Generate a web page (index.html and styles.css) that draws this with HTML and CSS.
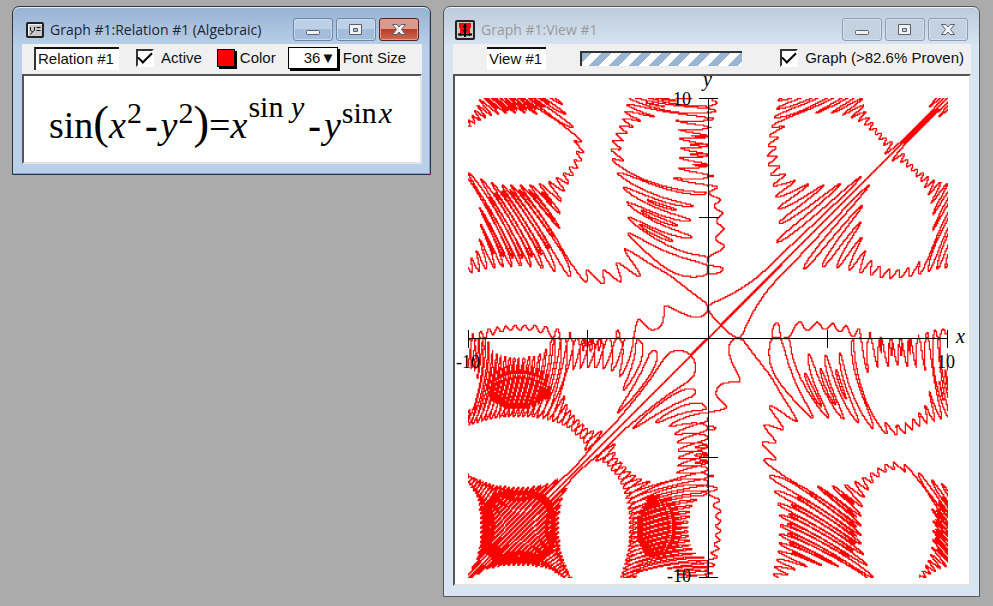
FILE: index.html
```html
<!DOCTYPE html>
<html lang="en">
<head>
<meta charset="utf-8">
<title>Graph #1</title>
<link rel="stylesheet" href="styles.css">
</head>
<body>
<main class="desktop">
  <section class="window window-active">
    <header class="titlebar">
      <svg class="app-icon" width="18" height="18" viewBox="0 0 18 18" aria-hidden="true">
        <rect x="1" y="2" width="16" height="14" rx="1" fill="#c8c8c8" stroke="#222" stroke-width="2"/>
        <path d="M2.500 14V3.500H16" fill="none" stroke="#f4f4f4"/>
        <path d="M4.500 6v3l2 2 2-2V6M6.500 11l-2 2.500M10.500 6.500h4M10.500 9.500h4" fill="none" stroke="#111"/>
      </svg>
      <h1 class="title">Graph #1:Relation #1 (Algebraic)</h1>
      <div class="controls">
        <button class="control" type="button" aria-label="Minimize"><svg width="16" height="14" viewBox="0 0 16 14"><rect x="1.500" y="7.500" width="13" height="4" rx="1"/></svg></button>
        <button class="control" type="button" aria-label="Maximize"><svg width="16" height="14" viewBox="0 0 16 14"><path fill-rule="evenodd" d="M1.500 1.500h12v10h-12zM5.500 5.500v3h4v-3z"/></svg></button>
        <button class="control control-close" type="button" aria-label="Close"><svg width="16" height="14" viewBox="0 0 16 14"><path d="M1.500 1.500h4.500l2 2.500 2-2.500h4.500l-4 5 4 5H10L8 9l-2 2.500H1.500l4-5z"/></svg></button>
      </div>
    </header>
    <div class="client">
      <div class="toolbar">
        <input class="name name-relation" type="text" value="Relation #1" aria-label="Relation name">
        <label class="field"><input class="check" type="checkbox" checked>Active</label>
        <div class="field field-color"><button class="swatch" type="button" id="color"></button><label for="color">Color</label></div>
        <div class="field field-size"><select class="size" id="size"><option>36▼</option></select><label for="size">Font Size</label></div>
      </div>
      <div class="pane equation">
        <span>sin</span><span class="paren">(</span><i>x</i><sup>2</sup><span class="minus">-</span><i>y</i><sup>2</sup><span class="paren">)</span><span>=</span><i>x</i><sup class="high">sin <i>y</i></sup><span class="minus">-</span><i>y</i><sup>sin<i class="thin">x</i></sup>
      </div>
    </div>
  </section>

  <section class="window">
    <header class="titlebar">
      <svg class="app-icon app-icon-view" width="20" height="20" viewBox="0 0 20 20" aria-hidden="true">
        <rect x="1" y="1" width="18" height="18" rx="1" fill="#c8c8c8" stroke="#222" stroke-width="2"/>
        <path d="M4 3h12v4l-1 2v4H5V9L4 7z" fill="#f00"/>
        <path d="M10 4v13M3 14.500h14" fill="none" stroke="#000" stroke-width="2"/>
        <path d="M8 6.500h4M8 10.500h4M5.500 13v3M14.500 13v3" fill="none" stroke="#000"/>
      </svg>
      <h1 class="title">Graph #1:View #1</h1>
      <div class="controls">
        <button class="control" type="button" aria-label="Minimize"><svg width="16" height="14" viewBox="0 0 16 14"><rect x="1.500" y="7.500" width="13" height="4" rx="1"/></svg></button>
        <button class="control" type="button" aria-label="Maximize"><svg width="16" height="14" viewBox="0 0 16 14"><path fill-rule="evenodd" d="M1.500 1.500h12v10h-12zM5.500 5.500v3h4v-3z"/></svg></button>
        <button class="control" type="button" aria-label="Close"><svg width="16" height="14" viewBox="0 0 16 14"><path d="M1.500 1.500h4.500l2 2.500 2-2.500h4.500l-4 5 4 5H10L8 9l-2 2.500H1.500l4-5z"/></svg></button>
      </div>
    </header>
    <div class="client">
      <div class="toolbar toolbar-view">
        <input class="name name-view" type="text" value="View #1" aria-label="View name">
        <div class="progress" role="progressbar" aria-label="Proof progress"></div>
        <label class="field field-graph"><input class="check" type="checkbox" checked>Graph (&gt;82.6% Proven)</label>
      </div>
      <div class="pane">
        <svg class="plot" viewBox="0 0 514 508" role="img" aria-label="Plot of the relation">
          <path id="curve" class="curve" transform="translate(13 22) scale(1.2)"/>
          <path class="axes" d="M13 262.500H492M253.500 22V502M13.500 254V272M132.500 254V272M372.500 254V272M492.500 254V272M244 22.500H263M244 141.500H263M244 381.500H263M244 501.500H263"/>
          <g class="ticks">
            <text x="218" y="29">10</text>
            <text x="212" y="506">-10</text>
            <text x="1" y="292">-10</text>
            <text x="482" y="292">10</text>
          </g>
          <g class="names">
            <text x="248" y="10">y</text>
            <text x="501" y="267">x</text>
          </g>
        </svg>
      </div>
    </div>
  </section>
</main>
<script src="plot.js"></script>
</body>
</html>
```
FILE: styles.css
```css
* { box-sizing: border-box; }

body {
  margin: 0;
  min-height: 100vh;
  background: #ababab;
  font: 15px/18px "Liberation Sans", Arial, sans-serif;
  color: #111;
}

.desktop {
  display: grid;
  grid-template-columns: 419fr 537fr;
  align-items: start;
  gap: 12px;
  padding: 6px 13px 6px 12px;
}

.window {
  padding: 0 8px 10px 9px;
  border: 1px solid #555;
  border-radius: 7px 7px 0 0;
  background: linear-gradient(#bccada, #d8e5f2 40px);
  box-shadow: inset 0 1px #eef4fa;
  min-width: 0;
}

.window-active {
  border-color: #333;
  background: linear-gradient(#98b2d0, #b9d0ea 40px);
  box-shadow: inset 0 1px #e4f0fa, inset -1px -1px #35c6dc;
}

.titlebar {
  display: flex;
  align-items: center;
  height: 37px;
  padding: 8px 3px 0 4px;
}

.app-icon { flex: none; }
.app-icon-view { margin-left: -2px; }

.title {
  flex: 1;
  margin: 0 0 0 6px;
  font: 14px/20px "Open Sans", "Noto Sans", sans-serif;
  color: #1c2633;
  white-space: nowrap;
}

.window:not(.window-active) .title { color: #999; }

.controls {
  display: flex;
  gap: 3px;
}

.control {
  display: grid;
  place-items: center;
  width: 40px;
  height: 23px;
  padding: 0;
  border: 1px solid #8d9db8;
  border-radius: 3px;
  background: #c3d1e1;
  box-shadow: inset 0 0 0 1px #d5e0ec;
}

.control svg {
  fill: #f2f2f2;
  stroke: #5a6070;
}

.window-active .control {
  border-color: #6f86a6;
  background: linear-gradient(#bdd0e6 50%, #a4bdda 50%);
  box-shadow: inset 0 0 0 1px #c9daec;
}

.window-active .control-close {
  border-color: #5d1e1e;
  background: linear-gradient(#d99a8e 48%, #b93c28 50%, #cd6b50);
  box-shadow: inset 0 0 0 1px #df9d90;
}

.client { background: #f0f0f0; }

.toolbar {
  display: flex;
  align-items: center;
  height: 30px;
  padding: 0 12px 2px;
}

.toolbar-view { padding: 0 7px 2px 34px; }

.name {
  height: 23px;
  padding: 0 2px 2px;
  border: 0;
  border-top: 2px solid #111;
  background: #fff;
  font: inherit;
  color: inherit;
}

.name-relation {
  width: 85px;
  border-left: 2px solid #333;
}

.name-view { width: 59px; }

.field {
  display: flex;
  align-items: center;
  gap: 5px;
  white-space: nowrap;
}

.field:not(.field-color):not(.field-size) {
  gap: 7px;
  margin-left: 17px;
}

.field-color { margin-left: 15px; }
.field-size { margin-left: 12px; }
.toolbar .field-graph:not(.field-color) { margin-left: auto; }

.check {
  appearance: none;
  width: 18px;
  height: 18px;
  margin: 0;
  border: 2px solid;
  border-color: #333 #fff #fff #333;
  background: #fff;
  display: grid;
  place-items: center;
}

.check:checked::before {
  content: "";
  width: 12px;
  height: 6px;
  margin-top: -4px;
  border: solid #000;
  border-width: 0 0 2px 2px;
  transform: rotate(-45deg);
}

.swatch {
  width: 18px;
  height: 18px;
  padding: 0;
  border: 1px solid #000;
  background: #f00;
  box-shadow: 2px 2px #000;
}

.size {
  appearance: none;
  width: 50px;
  height: 22px;
  padding: 0 3px 0 15px;
  border: 1px solid #000;
  border-radius: 0;
  background: #fff;
  box-shadow: 2px 2px #000;
  font: inherit;
  color: inherit;
}

.progress {
  width: 162px;
  height: 15px;
  margin-left: 34px;
  border-top: 2px solid #333;
  border-left: 2px solid #333;
  background: repeating-linear-gradient(135deg, #9ab5d4 0 7px, #fff 7px 14px);
}

.pane {
  border: 2px solid;
  border-color: #555 #e3e3e3 #e3e3e3 #555;
  background: #fff;
}

.equation {
  height: 90px;
  padding: 0 25px;
  font: 38px/98px "Liberation Serif", "Times New Roman", serif;
  color: #000;
  white-space: nowrap;
  overflow: hidden;
}

.equation i { margin-right: 1px; }

.equation sup {
  font-size: 30px;
  line-height: 0;
  vertical-align: 15px;
}

.equation .high { vertical-align: 21px; }

.equation .paren {
  font-size: 47px;
  line-height: 0;
}

.equation .minus {
  margin: 0 3px;
  font-weight: bold;
}

.equation .thin { margin-left: 2px; }

.plot {
  display: block;
  width: 100%;
  height: auto;
  overflow: visible;
}

.curve { fill: #f00; }

.axes {
  fill: none;
  stroke: #000;
  shape-rendering: crispEdges;
}

.ticks { font: 18px "Liberation Serif", serif; }
.names { font: italic 20px "Liberation Serif", serif; }
```
FILE: plot.js
```js
// Plots sin(x^2 - y^2) = x^sin(y) - y^sin(x) over [-10, 10] x [-10, 10].
// A negative base raised to a rational power may be of either sign,
// so both signs are tried for each negative coordinate.
const SIZE = 400;
const SUB = 2;
const N = SIZE * SUB;
const half = N / 2;

const coord = (i) => ((i - half) * 10) / half;

function signs(v) {
  return v < 0 ? [1, -1] : [1];
}

const hit = new Uint8Array(SIZE * SIZE);

function scan(i0, i1, j0, j1, sx, sy) {
  const width = i1 - i0 + 1;
  let above = null;
  for (let j = j0; j <= j1; j++) {
    const y = coord(j);
    const row = new Float64Array(width);
    for (let i = i0; i <= i1; i++) {
      const x = coord(i);
      const ax = Math.max(Math.abs(x), 1e-9);
      const ay = Math.max(Math.abs(y), 1e-9);
      row[i - i0] = Math.sin(x * x - y * y)
        - sx * Math.pow(ax, Math.sin(y)) + sy * Math.pow(ay, Math.sin(x));
    }
    if (above) {
      for (let k = 0; k < width - 1; k++) {
        const lo = Math.min(row[k], row[k + 1], above[k], above[k + 1]);
        const hi = Math.max(row[k], row[k + 1], above[k], above[k + 1]);
        if (lo < 0 && hi >= 0) {
          const px = Math.floor((i0 + k) / SUB);
          const py = SIZE - 1 - Math.floor((j - 1) / SUB);
          hit[py * SIZE + px] = 1;
        }
      }
    }
    above = row;
  }
}

for (const qx of [-1, 1]) {
  for (const qy of [-1, 1]) {
    for (const sx of signs(qx)) {
      for (const sy of signs(qy)) {
        scan(qx < 0 ? 0 : half, qx < 0 ? half : N, qy < 0 ? 0 : half, qy < 0 ? half : N, sx, sy);
      }
    }
  }
}

// Stretches of the diagonal y = x that are not yet resolved:
// [from, to, half-width in cells].
const unresolved = [[-3, 3, 1], [8.1, 9.5, 2]];
for (const [from, to, spread] of unresolved) {
  const first = Math.round(((from + 10) * SIZE) / 20);
  const last = Math.round(((to + 10) * SIZE) / 20);
  for (let i = first; i <= last; i++) {
    for (let s = spread === 1 ? 0 : -spread; s <= spread; s++) {
      hit[(SIZE - 1 - i) * SIZE + i + s] = 1;
    }
  }
}

let d = "";
for (let y = 0; y < SIZE; y++) {
  for (let x = 0; x < SIZE; x++) {
    if (!hit[y * SIZE + x]) continue;
    const start = x;
    while (x < SIZE && hit[y * SIZE + x]) x++;
    d += `M${start} ${y}H${x}v1H${start}z`;
  }
}
document.getElementById("curve").setAttribute("d", d);
```
